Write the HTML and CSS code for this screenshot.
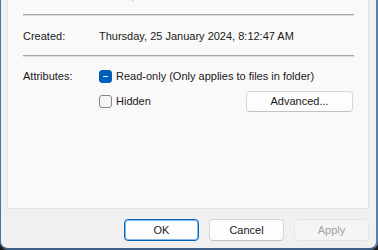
FILE: index.html
```html
<!DOCTYPE html>
<html>
<head>
<meta charset="utf-8">
<link rel="stylesheet" href="styles.css">
</head>
<body>
<div class="window">
  <div class="panel">
    <div class="row peek"><span class="label">Contains:</span><span>0 Files, 0 Folders</span></div>
    <div class="sep"></div>
    <div class="row created"><span class="label">Created:</span><span>Thursday, 25 January 2024, 8:12:47 AM</span></div>
    <div class="sep sep2"></div>
    <div class="attrs">
      <span class="label attr-label">Attributes:</span>
      <div class="attr-list">
        <label class="check"><span class="box mixed"></span>Read-only (Only applies to files in folder)</label>
        <div class="hidden-row">
          <label class="check"><span class="box"></span>Hidden</label>
          <button class="btn adv">Advanced...</button>
        </div>
      </div>
    </div>
  </div>
  <div class="actions">
    <button class="btn default">OK</button>
    <button class="btn">Cancel</button>
    <button class="btn" disabled>Apply</button>
  </div>
</div>
</body>
</html>
```
FILE: styles.css
```css
html, body {
  margin: 0;
  padding: 0;
  background: #1c1c1c;
}
body {
  font-family: "Liberation Sans", Arial, sans-serif;
  font-size: 11px;
  color: #1a1a1a;
}
.window {
  box-sizing: border-box;
  width: 378px;
  height: 250px;
  background: #f0f0f0;
  border-left: 1px solid #4a73a0;
  border-right: 2px solid #5a80aa;
  border-bottom: 2px solid #3d5f86;
  border-radius: 0 0 8px 8px;
  padding: 0 7px 0 6px;
  display: flex;
  flex-direction: column;
  overflow: hidden;
}
.panel {
  box-sizing: border-box;
  height: 209px;
  background: #f9f9f9;
  border: 1px solid #e3e3e3;
  border-top: none;
  padding: 0 14px 0 15px;
  overflow: hidden;
}
.row {
  display: flex;
  line-height: 16px;
  height: 16px;
  white-space: nowrap;
}
.label {
  width: 76px;
  flex: none;
}
.peek {
  margin-top: -13px;
}
.sep {
  height: 1px;
  background: #a8a8a8;
  box-shadow: 0 1px 0 #dcdcdc;
  margin-top: 11px;
}
.created {
  margin-top: 13px;
}
.sep2 {
  margin-top: 11px;
}
.attrs {
  display: flex;
  margin-top: 12px;
  line-height: 16px;
}
.attr-label {
  height: 16px;
}
.attr-list {
  flex: 1;
  display: flex;
  flex-direction: column;
}
.check {
  display: flex;
  align-items: center;
  height: 16px;
  white-space: nowrap;
}
.box {
  box-sizing: border-box;
  width: 13px;
  height: 13px;
  border-radius: 3px;
  border: 1px solid #858585;
  background: #f5f5f5;
  margin-right: 4px;
  position: relative;
  flex: none;
}
.box.mixed {
  background: #005fb8;
  border-color: #005fb8;
}
.box.mixed::after {
  content: "";
  position: absolute;
  left: 3px;
  top: 5px;
  width: 5px;
  height: 1.5px;
  background: #ffffff;
  border-radius: 1px;
}
.hidden-row {
  display: flex;
  align-items: center;
  justify-content: space-between;
  height: 22px;
  margin-top: 6px;
  padding-right: 1px;
}
.btn {
  box-sizing: border-box;
  font-family: inherit;
  font-size: 11px;
  color: #1a1a1a;
  background: #fdfdfd;
  border: 1px solid #d6d6d6;
  border-bottom-color: #c2c2c2;
  border-radius: 4px;
  height: 22px;
  width: 75px;
  padding: 0;
}
.adv {
  width: 107px;
  height: 21px;
}
.actions {
  display: flex;
  justify-content: flex-end;
  gap: 10px;
  margin-top: 10px;
}
.btn.default {
  border: 1px solid #0067c0;
  box-shadow: inset 0 0 0 1px #8ab8e6;
}
.btn:disabled {
  background: #f5f5f5;
  border-color: #e6e6e6;
  color: #a0a0a0;
}
```
